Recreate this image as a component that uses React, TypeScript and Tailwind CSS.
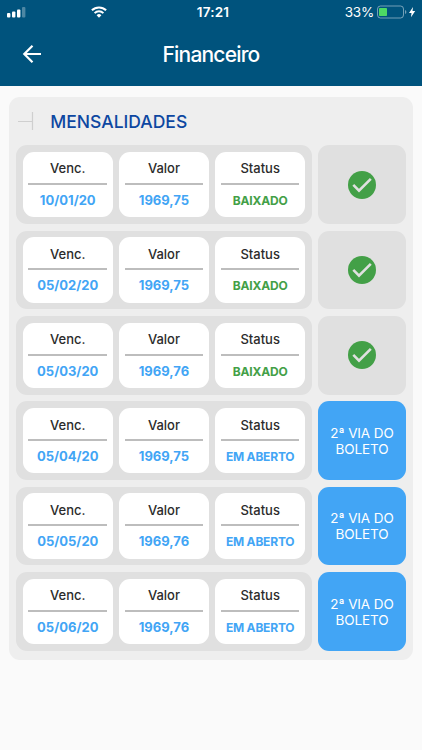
import { clsx } from "clsx";

interface Mensalidade {
  vencimento: string;
  valor: string;
  pago: boolean;
}

const mensalidades: Mensalidade[] = [
  { vencimento: "10/01/20", valor: "1969,75", pago: true },
  { vencimento: "05/02/20", valor: "1969,75", pago: true },
  { vencimento: "05/03/20", valor: "1969,76", pago: true },
  { vencimento: "05/04/20", valor: "1969,75", pago: false },
  { vencimento: "05/05/20", valor: "1969,76", pago: false },
  { vencimento: "05/06/20", valor: "1969,76", pago: false },
];

const StatusBar = () => (
  <div className="grid h-6 grid-cols-3 items-center pl-[7px] pr-[5px] text-white">
    <div className="flex items-center">
      <svg width="19" height="11" viewBox="0 0 19 11" fill="currentColor">
        <rect x="0" y="6" width="3.4" height="4.5" rx="1" />
        <rect x="5" y="4.5" width="3.4" height="6" rx="1" />
        <rect x="10" y="2.5" width="3.4" height="8" rx="1" />
        <rect x="15" y="0" width="3.4" height="10.5" rx="1" opacity="0.3" />
      </svg>
      <svg className="ml-[65px]" width="16" height="12" viewBox="0 0 16 12" fill="none" stroke="currentColor" strokeWidth="2">
        <path d="M.9 4.3a10.1 10.1 0 0 1 14.2 0" />
        <path d="M3.6 7.1a6.3 6.3 0 0 1 8.8 0" />
        <path d="M8 11.7 5.6 9.3a3.4 3.4 0 0 1 4.8 0z" fill="currentColor" stroke="none" />
      </svg>
    </div>
    <span className="pl-[2px] text-center text-[13.5px] font-semibold tracking-[0.2px]">17:21</span>
    <div className="flex items-center justify-end">
      <span className="text-[13.5px] tracking-[-0.2px]">33%</span>
      <svg className="ml-[3px]" width="40" height="14" viewBox="0 0 40 14">
        <rect x="0.5" y="1" width="26" height="12" rx="3" fill="none" stroke="#fff" strokeOpacity="0.45" />
        <rect x="2" y="3" width="8" height="8" rx="0.8" fill="#4cd964" />
        <path d="M28 5v4q1.4-.7 1.4-2T28 5z" fill="#fff" fillOpacity="0.45" />
        <path d="m36 2-4 6h2.5L34 12.2l4.2-6.3h-2.7z" fill="#fff" />
      </svg>
    </div>
  </div>
);

const Header = () => (
  <header className="h-[85.5px] bg-[#00537d] text-white">
    <StatusBar />
    <div className="grid h-[61px] grid-cols-[64px_1fr_64px] items-center">
      <button className="flex justify-center pb-px" aria-label="Voltar">
        <svg width="20" height="20" viewBox="0 0 20 20" fill="none" stroke="currentColor" strokeWidth="2.2">
          <path d="M19 10H3M10.5 1.8 2.3 10l8.2 8.2" />
        </svg>
      </button>
      <h1 className="text-center text-[21px] font-medium tracking-[-0.8px]">Financeiro</h1>
    </div>
  </header>
);

const Campo = ({ titulo, valor, className }: { titulo: string; valor: string; className: string }) => (
  <div className="flex h-[65.3px] flex-1 flex-col rounded-[11px] bg-white px-[5.5px] text-center">
    <span className="h-[33px] border-b-2 border-[#bdbdbd] pt-[6.5px] text-[13px] leading-5 font-medium text-[#2b2b2b]">
      {titulo}
    </span>
    <span className={clsx("leading-5 whitespace-nowrap", className)}>{valor}</span>
  </div>
);

const Linha = ({ vencimento, valor, pago }: Mensalidade) => (
  <div className="flex h-[78.7px] gap-[6.7px]">
    <div className="flex w-[295.3px] gap-[6.7px] rounded-[11px] bg-[#e0e0e0] p-[6.7px]">
      <Campo titulo="Venc." valor={vencimento} className="pt-[5px] text-[13px] font-bold text-[#42a5f5]" />
      <Campo titulo="Valor" valor={valor} className="pt-[5px] text-[13px] font-bold text-[#42a5f5]" />
      <Campo
        titulo="Status"
        valor={pago ? "BAIXADO" : "EM ABERTO"}
        className={clsx(
          "pt-[6px] text-[12px] font-bold tracking-[-0.2px]",
          pago ? "text-[#43a047]" : "text-[#42a5f5]"
        )}
      />
    </div>
    {pago ? (
      <div className="flex flex-1 items-center justify-center rounded-[11px] bg-[#e0e0e0]">
        <svg width="28" height="28" viewBox="0 0 28 28">
          <circle cx="14" cy="14" r="14" fill="#43a047" />
          <path d="m5.3 13.9 5.7 5.7L22.8 7.8" fill="none" stroke="#e0e0e0" strokeWidth="2.6" />
        </svg>
      </div>
    ) : (
      <button className="flex-1 rounded-[11px] bg-[#42a5f5] text-[13.5px] leading-[16px] tracking-[-0.1px] text-white">
        2ª VIA DO
        <br />
        BOLETO
      </button>
    )}
  </div>
);

export default function App() {
  return (
    <div className="min-h-screen bg-[#fafafa] font-['Inter','Liberation_Sans',sans-serif]">
      <Header />
      <main className="px-[9.3px] pt-[11.5px]">
        <section className="h-[562.7px] rounded-[11px] bg-[#eeeeee] px-[7px]">
          <div className="flex h-[48.3px] items-center">
            <svg className="ml-[2px]" width="16" height="19" viewBox="0 0 16 19" fill="none" stroke="#cfcfcf" strokeWidth="1.2">
              <path d="M0 9.5h14.5M14.5 0v18" />
            </svg>
            <h2 className="ml-4 pt-[2px] text-[17.5px] font-medium text-[#0d47a1]">MENSALIDADES</h2>
          </div>
          <div className="flex flex-col gap-[6.7px]">
            {mensalidades.map((item) => (
              <Linha key={item.vencimento} {...item} />
            ))}
          </div>
        </section>
      </main>
    </div>
  );
}
